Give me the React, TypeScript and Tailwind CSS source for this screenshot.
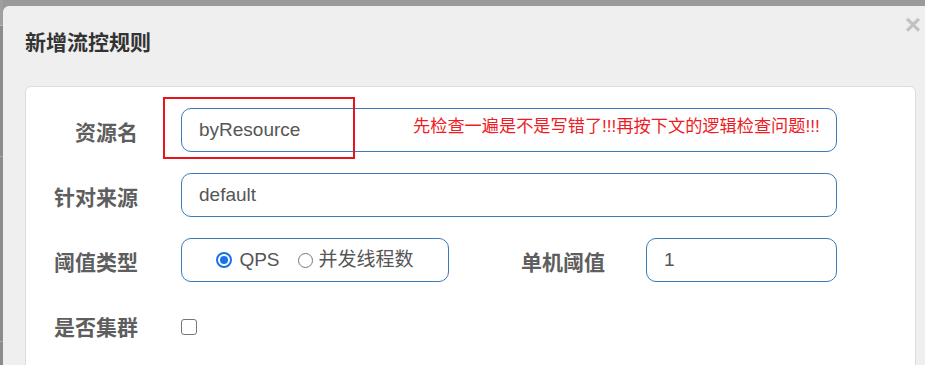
const sans = 'font-["Liberation_Sans","Noto_Sans_CJK_SC",sans-serif]'

function Label({ text, width = 'w-[112px]' }: { text: string; width?: string }) {
  return (
    <div className={`${width} shrink-0 mt-[6px] text-right text-[21px] font-bold text-[#5e5e5e] leading-[28px]`}>
      {text}
    </div>
  )
}

function TextInput({ value, className = '' }: { value: string; className?: string }) {
  return (
    <div
      className={`h-[44px] flex items-center pl-[17px] border border-[#3b7ab8] rounded-[10px] bg-white text-[19px] text-[#555] ${className}`}
    >
      {value}
    </div>
  )
}

export default function App() {
  return (
    <div className={`w-[925px] h-[365px] overflow-hidden bg-[#9a9a9a] flex items-start ${sans}`}>
      {/* page behind the modal */}
      <div className="w-[3px] h-[365px] shrink-0 flex flex-col bg-[#8c8c8c]">
        <div className="h-[25px] bg-[#a0a0a0]" />
        <div className="h-px bg-[#b5b5b5]" />
        <div className="h-[130px]" />
        <div className="h-px bg-[#a8a8a8]" />
        <div className="h-[184px]" />
        <div className="h-px bg-[#a8a8a8]" />
      </div>

      <div className="flex-1 mt-[6px] bg-[#efefef] rounded-tl-[6px] flex flex-col">
        {/* header */}
        <div className="flex items-start justify-between pl-[22px] pr-[4px]">
          <div className="pt-[24px] text-[21px] leading-[26px] font-bold text-[#333]">新增流控规则</div>
          <div className="mt-[4px] text-[28px] leading-[30px] font-bold text-[#c2c2c2]">×</div>
        </div>

        {/* body */}
        <div className="ml-[22px] mt-[30px] w-[891px] h-[320px] bg-white border border-[#dcdcdc] rounded-[6px] pt-[21px] flex flex-col gap-[21px]">
          <div className="flex items-center gap-[43px] mr-[78px]">
            <Label text="资源名" />
            <div className="relative flex-1">
              <TextInput value="byResource" />
              <div className="absolute left-[-18px] top-[-11px] w-[192px] h-[62px] border-2 border-[#e8141d]" />
              <span className="absolute left-[232px] top-[7px] text-[17.2px] leading-[22px] text-[#ee1c25] whitespace-nowrap">
                先检查一遍是不是写错了!!!再按下文的逻辑检查问题!!!
              </span>
            </div>
          </div>

          <div className="flex items-center gap-[43px] mr-[78px]">
            <Label text="针对来源" />
            <TextInput value="default" className="flex-1" />
          </div>

          <div className="flex items-center mr-[78px]">
            <Label text="阈值类型" />
            <div className="ml-[43px] w-[268px] h-[44px] shrink-0 border border-[#3b7ab8] rounded-[10px] flex items-center justify-center text-[19px] text-[#555]">
              <span className="w-[16px] h-[16px] rounded-full border-2 border-[#1a73e8] flex items-center justify-center">
                <span className="w-[8px] h-[8px] rounded-full bg-[#1a73e8]" />
              </span>
              <span className="ml-[7px]">QPS</span>
              <span className="ml-[18px] w-[15px] h-[15px] rounded-full border border-[#767676]" />
              <span className="ml-[6px]">并发线程数</span>
            </div>
            <Label text="单机阈值" width="w-[156px]" />
            <TextInput value="1" className="flex-1 ml-[41px]" />
          </div>

          <div className="flex items-center gap-[43px] h-[44px]">
            <Label text="是否集群" />
            <span className="mt-[4px] w-[16px] h-[16px] rounded-[3px] border border-[#767676] bg-white" />
          </div>
        </div>
      </div>
    </div>
  )
}
